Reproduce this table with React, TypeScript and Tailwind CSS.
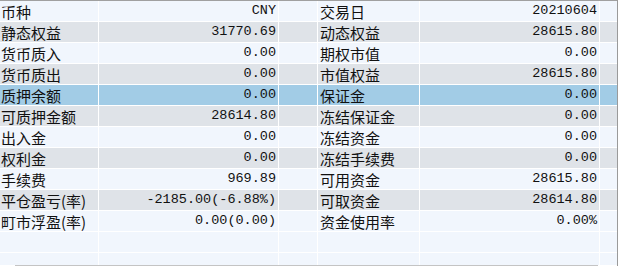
import React from "react";

const left: [string, string][] = [
  ["币种", "CNY"],
  ["静态权益", "31770.69"],
  ["货币质入", "0.00"],
  ["货币质出", "0.00"],
  ["质押余额", "0.00"],
  ["可质押金额", "28614.80"],
  ["出入金", "0.00"],
  ["权利金", "0.00"],
  ["手续费", "969.89"],
  ["平仓盈亏(率)", "-2185.00(-6.88%)"],
  ["町市浮盈(率)", "0.00(0.00)"],
  ["", ""],
  ["", ""],
];

const right: [string, string][] = [
  ["交易日", "20210604"],
  ["动态权益", "28615.80"],
  ["期权市值", "0.00"],
  ["市值权益", "28615.80"],
  ["保证金", "0.00"],
  ["冻结保证金", "0.00"],
  ["冻结资金", "0.00"],
  ["冻结手续费", "0.00"],
  ["可用资金", "28615.80"],
  ["可取资金", "28614.80"],
  ["资金使用率", "0.00%"],
  ["", ""],
  ["", ""],
];

function rowBg(i: number) {
  if (i === 4) return "bg-[#a2cce6]";
  if (i < 11 && i % 2 === 1) return "bg-[#dfe3e8]";
  return "bg-[#f1f6fd]";
}

const labelCls =
  "h-full border-r border-white pl-[1px] flex items-center text-[15px] leading-none text-[#111] [font-family:'Noto_Sans_CJK_SC',sans-serif] whitespace-nowrap overflow-hidden";
const valueCls =
  "h-full border-r border-white pr-[2px] flex items-center justify-end text-[13.5px] leading-none text-[#111] [font-family:'Liberation_Mono','Noto_Sans_CJK_SC',monospace] whitespace-nowrap";

export default function App() {
  return (
    <div className="w-[620px] h-[266px] bg-white overflow-hidden">
      <div className="w-[618px] h-[266px] border-r border-[#9a9a9a] flex flex-col">
        <div className="h-[265px] overflow-hidden border-t border-[#a0a0a0]">
          {left.map((l, i) => {
            const r = right[i];
            return (
              <div
                key={i}
                className={`grid grid-cols-[99px_180px_39px_102px_180px_17px] h-[21px] border-b border-white ${rowBg(i)}`}
              >
                <div className={labelCls}>{l[0]}</div>
                <div className={valueCls}>{l[1]}</div>
                <div className="h-full border-r border-white" />
                <div className={labelCls + " pl-[2px]"}>{r[0]}</div>
                <div className={valueCls}>{r[1]}</div>
                <div className="h-full" />
              </div>
            );
          })}
        </div>
        <div className="h-px ml-[15px] w-[583px] bg-[#c4c4c4]" />
      </div>
    </div>
  );
}
